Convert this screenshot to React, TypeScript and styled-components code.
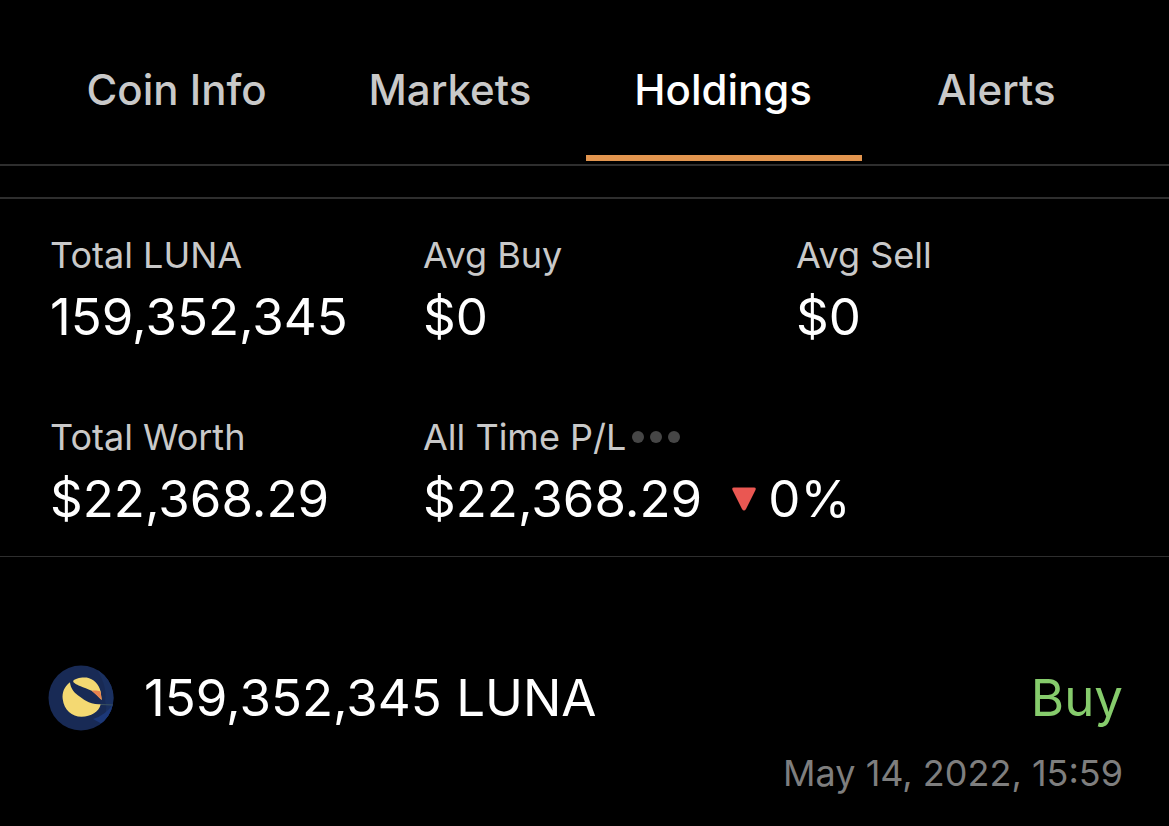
import React from "react";
import styled, { createGlobalStyle } from "styled-components";

const GlobalStyle = createGlobalStyle`
  * { box-sizing: border-box; }
  body {
    margin: 0;
    background: #000;
    color: #fff;
    font-family: Inter, "Liberation Sans", sans-serif;
  }
`;

const Tabs = styled.nav`
  display: grid;
  grid-template-columns: repeat(4, minmax(0, 1fr));
  padding: 16px 36px 0 40px;
  border-bottom: 2px solid #2e2e2e;
`;

const Tab = styled.button<{ $active?: boolean }>`
  position: relative;
  height: 148px;
  padding: 0;
  border: 0;
  background: none;
  font: 500 42px/48px Inter, "Liberation Sans", sans-serif;
  color: ${(p) => (p.$active ? "#fff" : "#c9c9c9")};
  white-space: nowrap;
  cursor: pointer;

  &::after {
    content: "";
    display: ${(p) => (p.$active ? "block" : "none")};
    position: absolute;
    left: -1px;
    right: -2px;
    bottom: 3px;
    height: 6px;
    background: #e2954f;
  }
`;

const Summary = styled.section`
  margin-top: 31px;
  border-top: 2px solid #2e2e2e;
  border-bottom: 1px solid #2e2e2e;
  padding: 32px 0 19px 50px;
`;

const Stats = styled.dl`
  display: grid;
  grid-template-columns: repeat(3, minmax(0, 1fr));
  row-gap: 58px;
  margin: 0;
`;

const Stat = styled.div`
  white-space: nowrap;
`;

const Label = styled.dt`
  display: flex;
  align-items: center;
  gap: 6px;
  font-size: 36px;
  line-height: 48px;
  color: #c9c9c9;
`;

const Value = styled.dd`
  display: flex;
  align-items: center;
  margin: 0;
  font-size: 51px;
  line-height: 76px;
`;

const MoreButton = styled.button`
  display: flex;
  gap: 6px;
  padding: 0;
  border: 0;
  background: none;
  cursor: pointer;
`;

const Dot = styled.span`
  width: 12px;
  height: 12px;
  border-radius: 50%;
  background: #464646;
`;

const Change = styled.span`
  display: flex;
  align-items: center;
  gap: 12px;
  margin-left: 30px;
`;

const Transaction = styled.article`
  display: grid;
  grid-template-columns: auto 1fr auto;
  align-items: center;
  column-gap: 30px;
  padding: 107px 46px 24px 48px;
  white-space: nowrap;
`;

const Amount = styled.span`
  font-size: 51px;
  line-height: 68px;
`;

const Side = styled(Amount)`
  color: #86cc6c;
`;

const Time = styled.time`
  grid-column: 1 / -1;
  justify-self: end;
  margin-top: 17px;
  font-size: 36px;
  line-height: 48px;
  color: #7e7e7e;
`;

const LunaLogo = () => (
  <svg width="66" height="66" viewBox="0 0 66 66" aria-hidden="true">
    <defs>
      <clipPath id="coin">
        <circle cx="33" cy="33" r="32.5" />
      </clipPath>
    </defs>
    <g clipPath="url(#coin)">
      <rect width="66" height="66" fill="#182a55" />
      <path d="M46 0H66V66H46Q62 50 57 36Q60 20 46 0Z" fill="#1a3060" />
      <path d="M45 54Q58 50 65 39V55L56 60Z" fill="#1c3878" />
      <path d="M53 39.500 65 40" stroke="#3b5260" strokeWidth="1" />
    </g>
    <path
      d="M22 17.300C16 22 14 28 14.700 34C16 45 24 51.700 33.500 51.700C43 51.700 51 47 52.700 39.300C49.500 39.500 46.500 39.200 43.700 38.300C39.500 37 37 35.500 33.700 33C29 29.500 26.500 28 24.700 25C23 22.500 22.300 20 22 17.300Z"
      fill="#f4d972"
    />
    <path
      d="M25.300 15.700C27 13.500 33 12 38.700 12.600C45.500 13.700 51 19.500 52.700 26.700L53.700 35C50.500 32 47.500 28.500 43.700 25.700C39.500 23.800 36 22.800 32 21C28.500 19.500 24.500 17.500 25.300 15.700Z"
      fill="#f4d972"
    />
    <path d="M43.700 25.700C46.500 25.200 50 25.500 52.500 26.500L53.700 35C50.500 32 47 28.500 43.700 25.700Z" fill="#e98350" />
  </svg>
);

const DownTriangle = () => (
  <svg width="24" height="24" viewBox="0 0 24 24" role="img" aria-label="Down">
    <path d="M2 .5H22Q24.500 .5 23.500 3L14 22Q12 25 10 22L.5 3Q-.5 .5 2 .5Z" fill="#ea5752" />
  </svg>
);

const tabs = ["Coin Info", "Markets", "Holdings", "Alerts"];

export default function App() {
  return (
    <>
      <GlobalStyle />
      <Tabs>
        {tabs.map((name) => (
          <Tab key={name} type="button" $active={name === "Holdings"}>
            {name}
          </Tab>
        ))}
      </Tabs>
      <main>
        <Summary>
          <Stats>
            <Stat>
              <Label>Total LUNA</Label>
              <Value>159,352,345</Value>
            </Stat>
            <Stat>
              <Label>Avg Buy</Label>
              <Value>$0</Value>
            </Stat>
            <Stat>
              <Label>Avg Sell</Label>
              <Value>$0</Value>
            </Stat>
            <Stat>
              <Label>Total Worth</Label>
              <Value>$22,368.29</Value>
            </Stat>
            <Stat>
              <Label>
                All Time P/L
                <MoreButton type="button" aria-label="More">
                  <Dot />
                  <Dot />
                  <Dot />
                </MoreButton>
              </Label>
              <Value>
                $22,368.29
                <Change>
                  <DownTriangle />
                  0%
                </Change>
              </Value>
            </Stat>
          </Stats>
        </Summary>
        <Transaction>
          <LunaLogo />
          <Amount>159,352,345 LUNA</Amount>
          <Side>Buy</Side>
          <Time dateTime="2022-05-14T15:59">May 14, 2022, 15:59</Time>
        </Transaction>
      </main>
    </>
  );
}
